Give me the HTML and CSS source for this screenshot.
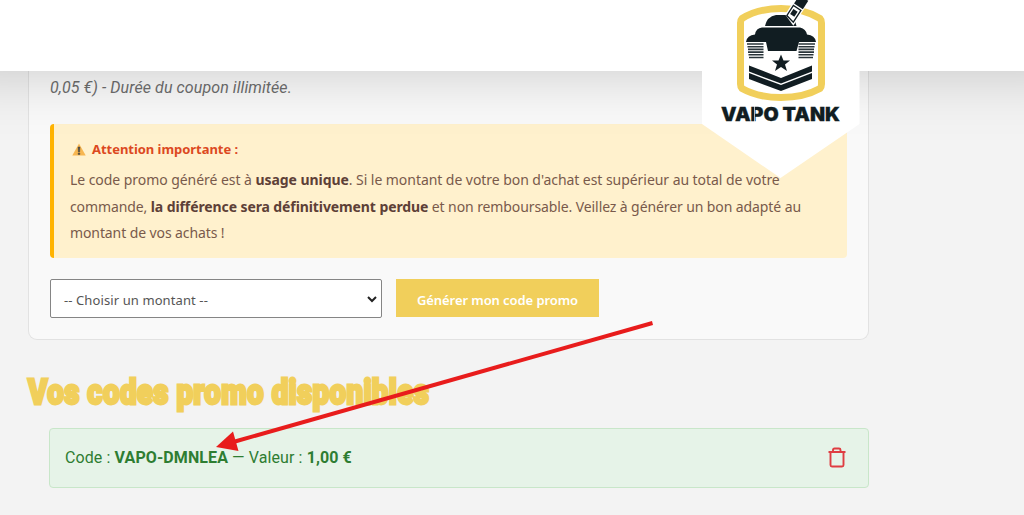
FILE: index.html
```html
<!DOCTYPE html>
<html lang="fr">
<head>
<meta charset="utf-8">
<title>Vapo Tank - Codes promo</title>
<link rel="stylesheet" href="styles.css">
</head>
<body>
<header class="site-header">
  <a class="brand" aria-label="Vapo Tank">
    <svg width="158" height="178" viewBox="0 0 158 178">
      <path d="M0 0H157.500V124L78.500 178L0 124Z" fill="#fff"/>
      <path d="M40 18.500Q56 8.500 79 8.500T118 18.500Q119.500 20 119.500 23V84Q119.500 87 118 88.500Q102 97.500 79 97.500T40 88.500Q38.500 87 38.500 84V23Q38.500 20 40 18.500Z" fill="#fff" stroke="#f1cf5b" stroke-width="7"/>
      <g fill="#111d22">
        <path d="M63 26Q65 16.500 74 15H84Q93 17 94.500 26Z"/>
        <path d="M44 42Q45 35 53 34.500Q54 28 60 27.500H98Q104 29 105 34.500Q113 35 114 42H97L94.500 51H66L64 42Z"/>
        <path d="M47 65.500L79 78L110 65.500V71.500L79 83.500L47 71.500Z"/>
        <path d="M47 73L79 85L110 73V79L79 91L47 79Z"/>
        <path d="M79 54.500L81.500 60.500H88L83 64.500L85 71L79 67L73 71L75 64.500L70 60.500H76.500Z"/>
      </g>
      <path d="M45 44H61.500M45.500 46.700H61.500M46 49.400H61.500M46 52.100H61.500M46.500 54.800H61.500M47 57.500H61.500M96.500 44H113M96.500 46.700H112.500M96.500 49.400H112M96.500 52.100H112M96.500 54.800H111.500M96.500 57.500H111" stroke="#29343a" stroke-width="1.600"/>
      <g transform="translate(84 15) rotate(33)">
        <path d="M-1 0V-22H12V5Z" fill="#fff"/>
        <path d="M1 0V-12H10V2Z" fill="#fff" stroke="#111d22" stroke-width="1.300"/>
        <path d="M3 -3V-9H8V-3Z" fill="#111d22"/>
        <path d="M.5 -14V-24H11V-14Z" fill="#111d22"/>
      </g>
      <text class="brand-name" x="19" y="120.500" textLength="119" lengthAdjust="spacingAndGlyphs">VAPO TANK</text>
      <path d="M52.500 106V122" stroke="#fff" stroke-width=".7"/>
    </svg>
  </a>
</header>
<main class="page">
  <section class="card">
    <p class="note">0,05 €) - Durée du coupon illimitée.</p>
    <div class="alert">
      <h3 class="alert-title">
        <svg class="warn" width="14" height="13" viewBox="0 0 14 13"><path d="M7 .5L13.700 12.500H.3Z" fill="#f7b650"/><path d="M6 4H8L7.600 9H6.400ZM6.200 10H7.800V11.500H6.200Z" fill="#4c4a45" stroke="#4c4a45" stroke-width=".5"/></svg>
        <span>Attention importante :</span>
      </h3>
      <p class="alert-text">
        <span class="line l1">Le code promo généré est à <b>usage unique</b>. Si le montant de votre bon d'achat est supérieur au total de votre</span>
        <span class="line l2">commande, <b>la différence sera définitivement perdue</b> et non remboursable. Veillez à générer un bon adapté au</span>
        <span class="line l3">montant de vos achats !</span>
      </p>
    </div>
    <div class="form">
      <div class="select"><span>-- Choisir un montant --</span>
        <svg width="10" height="7" viewBox="0 0 10 7"><path d="M1 1L5 5L9 1" fill="none" stroke="#222" stroke-width="2"/></svg>
      </div>
      <button class="generate"><span>Générer mon code promo</span></button>
    </div>
  </section>
  <h2 class="title"><span>Vos codes promo disponibles</span></h2>
  <div class="coupon">
    <p class="coupon-text">Code : <b>VAPO-DMNLEA</b> — Valeur : <b>1,00 €</b></p>
    <svg class="trash" width="18" height="21" viewBox="0 0 18 21"><path d="M.5 5H17.500M5 5V3Q5 1.500 6.500 1.500H11Q12.500 1.500 12.500 3V5M2.500 5V18Q2.500 19.500 4 19.500H14Q15.500 19.500 15.500 18V5" fill="none" stroke="#df3d42" stroke-width="1.900"/></svg>
  </div>
</main>
<svg class="arrow" width="440" height="135" viewBox="0 0 440 135"><path d="M437.500 3L20 121.500" stroke="#e81c1c" stroke-width="4"/><path d="M1 127L18 111.500L23.500 131Z" fill="#e81c1c"/></svg>
</body>
</html>
```
FILE: styles.css
```css
* { box-sizing: border-box; }
body { margin: 0; height: 515px; overflow: hidden; position: relative; background: #f3f3f3; font-family: Roboto, sans-serif; }
h2, h3, p { margin: 0; }
.site-header { position: relative; z-index: 2; height: 70.500px; margin-bottom: -.5px; background: #fff; box-shadow: 0 -60px 60px 60px rgba(0,0,0,.2); }
.brand { position: absolute; left: 702px; top: 0; }
.brand svg { display: block; }
.brand-name { font: 900 18.500px Inter, sans-serif; fill: #111d22; stroke: #111d22; stroke-width: .3; }
.page { padding-left: 28px; width: 869px; }
.card { height: 270px; padding: 8px 21px 0; background: #f9f9f9; border: 1px solid #e2e2e2; border-top: 0; border-radius: 0 0 9px 9px; }
.note { height: 46px; font-size: 16px; line-height: 20px; letter-spacing: .09px; font-style: italic; color: #6d6d6d; white-space: nowrap; }
.alert { height: 134px; padding: 15px 0 0 16px; border-left: 4px solid #ffb300; border-radius: 4px; background: #fff1cd; font-family: "Noto Sans", sans-serif; }
.alert-title { display: flex; align-items: center; gap: 6px; height: 20px; padding-left: 2px; font-size: 13px; letter-spacing: -.04px; color: #dc491f; }
.alert-text { padding-top: 8px; font-size: 14px; color: #795a4b; }
.alert-text b { color: #5d4037; }
.line { display: block; height: 26.500px; line-height: 26.500px; white-space: nowrap; }
.l1 { letter-spacing: -.055px; }
.l2, .l3 { letter-spacing: -.1px; }
.form { display: flex; gap: 14px; padding-top: 21px; font-family: "Noto Sans", sans-serif; }
.select { display: flex; align-items: center; justify-content: space-between; width: 332px; height: 39px; padding: 2px 4px 0 13px; border: 1px solid #858585; border-radius: 2px; background: #fff; font-size: 13px; letter-spacing: .1px; color: #555; }
.generate { width: 203px; height: 38px; padding: 3px 0 0; border: 0; background: #f1cf5b; color: #fff; font: 600 13px "Noto Sans", sans-serif; letter-spacing: -.08px; }
.title { height: 88px; padding-top: 26px; color: #f1cf5b; font: 900 34px/50px Roboto, sans-serif; white-space: nowrap; }
.title span { display: inline-block; transform: scale(.87, 1.05); transform-origin: left; letter-spacing: .35px; -webkit-text-stroke: 2.700px #f1cf5b; }
.coupon { display: flex; align-items: center; justify-content: space-between; height: 60px; margin-left: 21px; padding: 0 22px 1px 15px; border: 1px solid #c8e6c9; border-radius: 4px; background: #e6f3e8; color: #2e7d32; font-size: 16px; letter-spacing: .1px; }
.arrow { position: absolute; z-index: 3; left: 215px; top: 320px; }
```
